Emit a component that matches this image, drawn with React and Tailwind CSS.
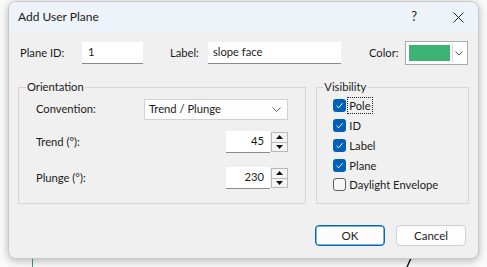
import React from "react";

const font = { fontFamily: 'Lato, "Noto Sans", sans-serif' };

function Check({ checked, label, focus }) {
  return (
    <div className="flex items-center h-[19.75px]">
      {checked ? (
        <div className="w-[13px] h-[13px] rounded-[3px] bg-[#005fb8] flex items-center justify-center">
          <svg width="9" height="9" viewBox="0 0 9 9">
            <path d="M1.5 4.8 L3.6 6.8 L7.5 2.2" stroke="#ffffff" strokeWidth="1" fill="none" />
          </svg>
        </div>
      ) : (
        <div className="w-[13px] h-[13px] rounded-[3px] border border-[#5d5d5d] bg-[#f6f6f6]" />
      )}
      <span
        className={
          "ml-[2px] leading-[15px] px-[1px] " +
          (focus ? "outline outline-1 outline-dotted outline-[#222]" : "")
        }
      >
        {label}
      </span>
    </div>
  );
}

function Spin({ value }) {
  return (
    <div className="flex items-center">
      <div className="w-[44px] h-[22px] bg-white border-b border-[#8a8a8a] flex items-center justify-end pr-[6px] text-[#1a1a1a]">
        {value}
      </div>
      <div className="ml-[1px] flex flex-col w-[17px] h-[20px] border border-[#b9b9b9] bg-[#f4f4f4]">
        <div className="flex-1 flex items-center justify-center border-b border-[#b9b9b9]">
          <svg width="7" height="4" viewBox="0 0 7 4"><path d="M0 4 L3.5 0 L7 4 Z" fill="#111" /></svg>
        </div>
        <div className="flex-1 flex items-center justify-center">
          <svg width="7" height="4" viewBox="0 0 7 4"><path d="M0 0 L3.5 4 L7 0 Z" fill="#111" /></svg>
        </div>
      </div>
    </div>
  );
}

export default function App() {
  return (
    <div className="relative w-[487px] h-[267px] bg-[#fafafa] overflow-hidden text-[11.2px] text-[#1b1b1b]" style={font}>
      {/* background canvas lines */}
      <div className="absolute left-[32px] top-[250px] w-[1px] h-[17px] bg-[#3aa36b]" />
      <svg className="absolute left-[404px] top-[256px]" width="10" height="11" viewBox="0 0 10 11">
        <path d="M8 0 L3 11" stroke="#111" strokeWidth="1.4" />
      </svg>

      <div className="relative ml-[8px] mt-[1px] w-[471px] h-[258px] rounded-[8px] bg-[#f0f0f0] border border-[#c9c9c9] shadow-[0_2px_8px_rgba(0,0,0,0.28)] overflow-hidden flex flex-col">
        {/* title bar */}
        <div className="h-[30px] bg-[#eef2f9] flex items-center pl-[9px] shrink-0">
          <span className="text-[12px] text-[#1a1a1a]">Add User Plane</span>
          <span className="ml-auto mr-[36px] text-[13px]">?</span>
          <svg className="mr-[14px]" width="11" height="11" viewBox="0 0 11 11">
            <path d="M0.5 0.5 L10.5 10.5 M10.5 0.5 L0.5 10.5" stroke="#222" strokeWidth="1" />
          </svg>
        </div>

        {/* body */}
        <div className="flex-1 flex flex-col px-[9px]">
          {/* top row */}
          <div className="flex items-center mt-[10px] h-[22px]">
            <span className="ml-[2px] w-[62px]">Plane ID:</span>
            <div className="w-[61px] h-[22px] bg-white border-b border-[#8a8a8a] flex items-center pl-[6px]">1</div>
            <span className="ml-[27px] w-[38px]">Label:</span>
            <div className="w-[133px] h-[22px] bg-white border-b border-[#8a8a8a] flex items-center pl-[5px]">slope face</div>
            <span className="ml-[28px] w-[36px]">Color:</span>
            <div className="w-[63px] h-[24px] border border-[#a9a9a9] bg-white flex items-center p-[3px]">
              <div className="w-[41px] h-[16px] bg-[#3cb371]" />
              <div className="ml-[2px] flex-1 h-[18px] border-l border-[#d9d9d9] flex items-center justify-center">
                <svg width="8" height="5" viewBox="0 0 8 5"><path d="M0.5 0.5 L4 4 L7.5 0.5" stroke="#555" fill="none" /></svg>
              </div>
            </div>
          </div>

          {/* group boxes */}
          <div className="flex mt-[16px] gap-[10px]">
            <fieldset className="w-[289px] h-[124px] border border-[#d6d6d6] px-[17px] pb-0 m-0 rounded-none">
              <legend className="ml-[-10px] px-[1px] leading-[14px]">Orientation</legend>
              <div className="flex items-center mt-[5px] h-[20px]">
                <span className="w-[108px]">Convention:</span>
                <div className="w-[144px] h-[21px] border border-[#d0d0d0] bg-[#fdfdfd] flex items-center pl-[4px] pr-[6px]">
                  <span>Trend / Plunge</span>
                  <svg className="ml-auto" width="9" height="5" viewBox="0 0 9 5"><path d="M0.5 0.5 L4.5 4.5 L8.5 0.5" stroke="#666" fill="none" /></svg>
                </div>
              </div>
              <div className="flex items-center mt-[12px]">
                <span className="w-[190px]">Trend (°):</span>
                <Spin value="45" />
              </div>
              <div className="flex items-center mt-[14px]">
                <span className="w-[190px]">Plunge (°):</span>
                <Spin value="230" />
              </div>
            </fieldset>

            <fieldset className="w-[153px] h-[124px] border border-[#d6d6d6] pl-[16px] m-0 rounded-none">
              <legend className="ml-[-10px] px-[1px] leading-[14px]">Visibility</legend>
              <div className="mt-[2px]">
                <Check checked label="Pole" focus />
                <Check checked label="ID" />
                <Check checked label="Label" />
                <Check checked label="Plane" />
                <Check label="Daylight Envelope" />
              </div>
            </fieldset>
          </div>

          {/* buttons */}
          <div className="flex justify-end mt-[21px] mr-[3px] gap-[11px]">
            <button className="w-[70px] h-[21px] rounded-[4px] bg-[#fdfdfd] border border-[#0067c0] shadow-[inset_0_0_0_0.5px_#0067c0] text-[11.5px]">OK</button>
            <button className="w-[70px] h-[21px] rounded-[4px] bg-[#fdfdfd] border border-[#d0d0d0] text-[11.5px]">Cancel</button>
          </div>
        </div>
      </div>
    </div>
  );
}
